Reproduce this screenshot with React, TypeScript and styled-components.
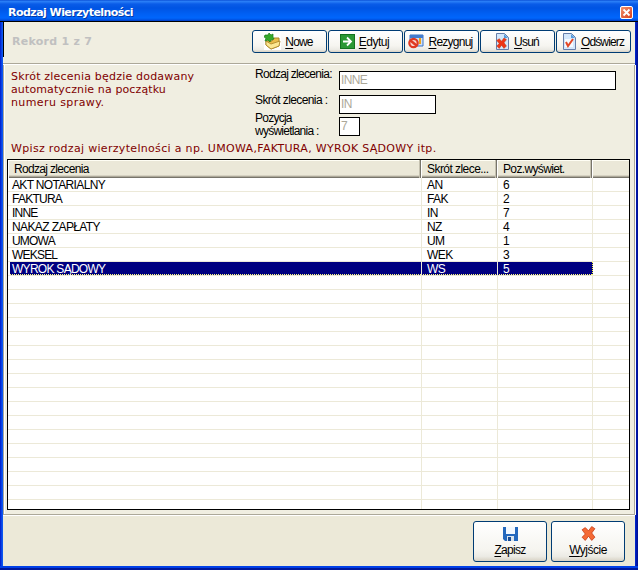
import React from 'react';
import styled, { createGlobalStyle, css } from 'styled-components';

const Global = createGlobalStyle`
  * { box-sizing: border-box; }
  body { margin: 0; background: #ece9d8; }
`;

const Window = styled.main`
  width: 638px;
  height: 570px;
  display: flex;
  flex-direction: column;
  overflow: hidden;
  padding: 0 3px 4px;
  background: linear-gradient(90deg, #0018c8 0, #0c50ee 2px, #0a5cf0 3px, #0040e0 3px, #0030d8 635px, #0018b8 636px, #00108c 638px);
  box-shadow: inset 0 -2px #00189c, inset 0 -4px #0040e8;
  font: 12px/14px "Liberation Sans", Arial, sans-serif;
  color: #000;
`;

const TitleBar = styled.header`
  height: 22px;
  flex: none;
  margin: 0 -3px;
  padding: 2px 5px 0 8px;
  display: flex;
  align-items: center;
  justify-content: space-between;
  background: linear-gradient(180deg, #0040cc 0, #2d82f8 1px, #2478f4 2px, #0a5ce8 4px, #0054e3 8px, #0060f4 14px, #0066fc 18px, #0050e0 20px, #0038c0 21px, #000 21px);
`;

const Title = styled.h1`
  margin: 0;
  padding-top: 1px;
  font: bold 11px/14px "DejaVu Sans", Verdana, sans-serif;
  letter-spacing: -0.54px;
  color: #fff;
  text-shadow: 1px 1px #0038a8;
  white-space: nowrap;
`;

const CloseButton = styled.button`
  width: 13px;
  height: 13px;
  padding: 0;
  display: flex;
  align-items: center;
  justify-content: center;
  border: 1px solid #fff;
  border-radius: 2px;
  background: linear-gradient(135deg, #f0906c, #d8401c);
`;

const Toolbar = styled.div`
  height: 43px;
  flex: none;
  padding: 8px 4px 0 9px;
  display: flex;
  justify-content: space-between;
  border-bottom: 1px solid #fff;
  background: linear-gradient(#000, #000) 0 0 / 1px 35px no-repeat, #f0eee1;
  box-shadow: inset 0 -1px #aca899;
`;

const RecordCount = styled.div`
  margin-top: 5px;
  font: bold 11px/14px "DejaVu Sans", Verdana, sans-serif;
  letter-spacing: 0.26px;
  color: #c0c0c0;
  white-space: nowrap;
`;

const ButtonRow = styled.div`
  display: flex;
  gap: 1px;
`;

const Button = styled.button<{ $large?: boolean }>`
  width: 75px;
  height: 23px;
  padding: 0 2px 0 0;
  display: flex;
  align-items: center;
  justify-content: center;
  gap: 4px;
  border: 1px solid #003c74;
  border-radius: 3px;
  background: linear-gradient(180deg, #fff 0, #f6f5f0 70%, #ecebe5 88%, #d8d2c4 100%);
  font: inherit;
  color: #000;
  svg { flex: none; }
  ${p => p.$large && css`
    width: 74px;
    height: 41px;
    padding: 0;
    flex-direction: column;
    gap: 2px;
  `}
`;

const Caption = styled.span<{ $spacing: number }>`
  letter-spacing: ${p => p.$spacing}px;
  white-space: nowrap;
`;

const Key = styled.u`
  text-underline-offset: 2px;
  text-decoration-thickness: 1px;
`;

const Content = styled.section`
  height: 450px;
  flex: none;
  padding: 4px 4px 0 3px;
  background: #f0eee1;
  border: solid #aca899;
  border-width: 0 1px 1px;
  box-shadow: inset 1px 0 #fff, 1px 0 #fff;
`;

const Form = styled.div`
  height: 71px;
  display: flex;
  padding-left: 4px;
`;

const Note = styled.p<{ $spacing: number }>`
  margin: 0;
  color: #800000;
  font: 11px/13px "DejaVu Sans", Verdana, sans-serif;
  letter-spacing: ${p => p.$spacing}px;
  white-space: nowrap;
`;

const NoteColumn = styled.div`
  width: 244px;
  flex: none;
  padding-top: 1px;
`;

const Fields = styled.div`
  display: grid;
  grid-template-columns: 84px 277px;
  grid-template-rows: 24px 19px 25px;
`;

const Label = styled.label<{ $spacing: number; $top: number }>`
  line-height: 13px;
  letter-spacing: ${p => p.$spacing}px;
  white-space: pre;
  margin-top: ${p => p.$top}px;
`;

const Input = styled.div<{ $width: number; $top: number }>`
  width: ${p => p.$width}px;
  height: 19px;
  margin-top: ${p => p.$top}px;
  padding: 1px 1px 0;
  border: 1px solid #000;
  background: #fff;
  color: #aca899;
  line-height: 14px;
  letter-spacing: -0.6px;
`;

const Hint = styled.div`
  height: 19px;
  padding: 2px 0 0 4px;
`;

const Table = styled.div`
  width: 623px;
  height: 351px;
  border: 1px solid #000;
  background: #fff;
  overflow: hidden;
`;

const columns = css`
  display: grid;
  grid-template-columns: 413px 76px 95px 37px;
`;

const HeadRow = styled.div`
  ${columns}
  height: 18px;
  background: #ebe8d8;
  box-shadow: inset 0 -1px #77746a, inset 0 -2px #aca899, inset 0 -3px #d6d2c2, inset 0 1px #fffef4;
`;

const HeadCell = styled.div<{ $spacing: number; $indent: number }>`
  padding: 2px 0 0 ${p => p.$indent}px;
  letter-spacing: ${p => p.$spacing}px;
  white-space: nowrap;
  border-right: 1px solid #77746a;
  box-shadow: inset -1px 0 #c5c1b0, inset 1px 0 #fff;
  &:last-child { border-right: 0; box-shadow: inset 1px 0 #fff; }
`;

const Row = styled.div<{ $selected?: boolean }>`
  ${columns}
  height: 14px;
  line-height: 14px;
  border-bottom: 1px solid #ece9d8;
  color: ${p => (p.$selected ? '#fff' : '#000')};
  ${p => p.$selected && css`
    background: linear-gradient(#000080, #000080) 2px 0 / 583px 13px no-repeat;
  `}
`;

const Cell = styled.div<{ $spacing?: number; $indent: number; $selected?: boolean }>`
  height: 13px;
  padding-left: ${p => p.$indent}px;
  letter-spacing: ${p => p.$spacing ?? -0.6}px;
  white-space: nowrap;
  border-right: 1px solid #ece9d8;
  &:last-child { border-right: 0; }
  &:first-child { width: 414px; }
  &:nth-child(2) { width: 77px; }
  &:nth-child(3) { width: 96px; }
  ${p => p.$selected && css`
    &:not(:last-child) { background: repeating-linear-gradient(90deg, #ffff7f 0 1px, transparent 1px 2px) 2px 12px / 100% 1px no-repeat; }
    &:nth-child(3) { border-right: 1px dotted #ffff40; }
  `}
`;

const Footer = styled.footer`
  flex: 1;
  display: flex;
  justify-content: flex-end;
  gap: 4px;
  padding: 5px 10px 0 0;
  background: #ece9d8;
  border-top: 1px solid #fff;
`;

const FolderIcon = () => (
  <svg width="17" height="17" viewBox="0 0 17 17">
    <rect width="17" height="17" fill="#fff" />
    <path d="M2 8h6l2-3h5v8l-8 3-5-4z" fill="#e9bd4c" stroke="#a98426" />
    <path d="M2 8l5 3 9-3-1 5-8 3-5-4z" fill="#fbe792" stroke="#a98426" strokeWidth=".8" />
    <path d="M1 2l3 0 1-2 2 2 2-1v3l1 2-3 1-1 2-2-2-3 1 1-3-2-1z" fill="#36a82b" stroke="#187e16" strokeWidth=".7" />
  </svg>
);
const ArrowIcon = () => (
  <svg width="15" height="15" viewBox="0 0 15 15">
    <rect x=".5" y=".5" width="14" height="14" fill="#2b9835" stroke="#14731f" />
    <path d="M3 7.5h8M7 3.5l4 4-4 4" fill="none" stroke="#fff" strokeWidth="1.8" />
  </svg>
);
const CancelIcon = () => (
  <svg width="16" height="16" viewBox="0 0 16 16">
    <path d="M2 1h13v11H2z" fill="#cfe0f8" stroke="#3972c6" />
    <path d="M2 1h13v3H2z" fill="#437cce" />
    <path d="M12 4v6" stroke="#eda318" strokeWidth="2" />
    <circle cx="5.5" cy="9" r="4.2" fill="#f6d5ce" stroke="#e03922" strokeWidth="2.2" />
    <path d="M2.5 6.5l6 5" stroke="#e03922" strokeWidth="2.4" />
  </svg>
);
const CrossShape = ({ fill = '#ec4d24' }) => (
  <path d="M1 3l3-2 3 3 3-4 3 2-3 4 3 4-3 3-3-4-3 4-3-3 3-3z" fill={fill} stroke="#c43712" strokeWidth=".7" />
);
const PageIcon = ({ kind }: { kind: 'delete' | 'check' }) => (
  <svg width="16" height="17" viewBox="0 0 16 17">
    <path d="M2.5.5h8l4 4v12h-12z" fill="#d4e7fb" stroke="#667eaa" />
    <path d="M10 1v4h4z" fill="#559bdd" />
    {kind === 'delete'
      ? <g transform="translate(2 5) scale(.8)"><CrossShape fill="#ee3517" /></g>
      : <><path d="M4 6h8v8H4z" fill="#f5faff" /><path d="M5 9l2 4 5-7" fill="none" stroke="#e34827" strokeWidth="2" /></>}
  </svg>
);
const SaveIcon = () => (
  <svg width="15" height="15" viewBox="0 0 15 15">
    <path d="M0 1h15v14H2l-2-2z" fill="#2468bd" />
    <path d="M3 1h9v7H3z" fill="#f2f8ff" />
    <path d="M4 10h7v5H4z" fill="#dae4ed" />
    <path d="M5 11h3v4H5z" fill="#174b94" />
  </svg>
);
const ExitIcon = () => (
  <svg width="15" height="15" viewBox="0 0 14 13"><CrossShape fill="#f46a35" /></svg>
);

const actions = [
  { key: 'N', rest: 'owe', icon: <FolderIcon />, spacing: -0.8 },
  { key: 'E', rest: 'dytuj', icon: <ArrowIcon />, spacing: -0.5 },
  { key: 'R', rest: 'ezygnuj', icon: <CancelIcon />, spacing: -0.75 },
  { key: 'U', rest: 'suń', icon: <PageIcon kind="delete" />, spacing: -0.8 },
  { key: 'O', rest: 'dświerz', icon: <PageIcon kind="check" />, spacing: -0.85 },
];

const records = [
  { name: 'AKT NOTARIALNY', code: 'AN', position: 6, spacing: -0.66 },
  { name: 'FAKTURA', code: 'FAK', position: 2, spacing: -0.75 },
  { name: 'INNE', code: 'IN', position: 7, spacing: -0.8 },
  { name: 'NAKAZ ZAPŁATY', code: 'NZ', position: 4, spacing: -0.6 },
  { name: 'UMOWA', code: 'UM', position: 1, spacing: -0.8 },
  { name: 'WEKSEL', code: 'WEK', position: 3, spacing: -0.8 },
  { name: 'WYROK SĄDOWY', code: 'WS', position: 5, spacing: -0.72, selected: true },
];
const emptyRows = Array.from({ length: 17 }, (_, i) => i);

export default function App() {
  return (
    <>
      <Global />
      <Window>
        <TitleBar>
          <Title>Rodzaj Wierzytelności</Title>
          <CloseButton aria-label="Zamknij">
            <svg width="9" height="9" viewBox="0 0 9 9"><path d="M1.5 1.5l6 6m0-6l-6 6" stroke="#fff" strokeWidth="1.8" /></svg>
          </CloseButton>
        </TitleBar>
        <Toolbar>
          <RecordCount>Rekord 1 z 7</RecordCount>
          <ButtonRow>
            {actions.map(a => (
              <Button key={a.key}>{a.icon}<Caption $spacing={a.spacing}><Key>{a.key}</Key>{a.rest}</Caption></Button>
            ))}
          </ButtonRow>
        </Toolbar>
        <Content>
          <Form>
            <NoteColumn>
              <Note $spacing={0.2}>Skrót zlecenia będzie dodawany</Note>
              <Note $spacing={0.12}>automatycznie na początku</Note>
              <Note $spacing={0.4}>numeru sprawy.</Note>
            </NoteColumn>
            <Fields>
              <Label $spacing={-0.7} $top={-1}>Rodzaj zlecenia:</Label>
              <Input $width={277} $top={2}>INNE</Input>
              <Label $spacing={-0.6} $top={1}>Skrót zlecenia :</Label>
              <Input $width={97} $top={2}>IN</Input>
              <Label $spacing={-0.75} $top={0}>{'Pozycja\nwyświetlania :'}</Label>
              <Input $width={21} $top={5}>7</Input>
            </Fields>
          </Form>
          <Hint><Note $spacing={0.32}>Wpisz rodzaj wierzytelności a np. UMOWA,FAKTURA, WYROK SĄDOWY itp.</Note></Hint>
          <Table>
            <HeadRow>
              <HeadCell $spacing={-0.67} $indent={6}>Rodzaj zlecenia</HeadCell>
              <HeadCell $spacing={-0.55} $indent={6}>Skrót zlece...</HeadCell>
              <HeadCell $spacing={-0.65} $indent={6}>Poz.wyświet.</HeadCell>
              <HeadCell $spacing={0} $indent={0} />
            </HeadRow>
            {records.map(r => (
              <Row key={r.name} $selected={r.selected}>
                <Cell $indent={4} $spacing={r.spacing} $selected={r.selected}>{r.name}</Cell>
                <Cell $indent={6} $selected={r.selected}>{r.code}</Cell>
                <Cell $indent={6} $selected={r.selected}>{r.position}</Cell>
                <Cell $indent={0} />
              </Row>
            ))}
            {emptyRows.map(i => (
              <Row key={i}><Cell $indent={0} /><Cell $indent={0} /><Cell $indent={0} /><Cell $indent={0} /></Row>
            ))}
          </Table>
        </Content>
        <Footer>
          <Button $large><SaveIcon /><Caption $spacing={-0.7}><Key>Z</Key>apisz</Caption></Button>
          <Button $large><ExitIcon /><Caption $spacing={-0.5}><Key>W</Key>yjście</Caption></Button>
        </Footer>
      </Window>
    </>
  );
}
